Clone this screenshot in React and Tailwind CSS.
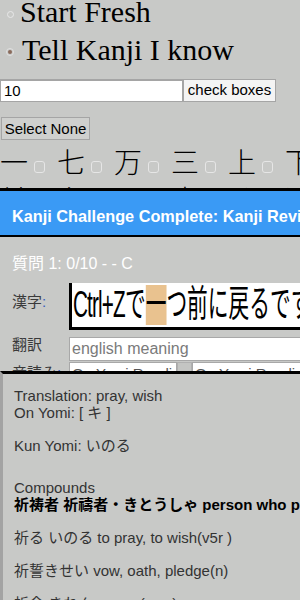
import React from "react";

const sans = { fontFamily: '"Liberation Sans", "Noto Sans CJK JP", sans-serif' };

const row1 = ["一", "七", "万", "三", "上", "下"];
const row2 = ["並", "主", "両", "光", "父", "込"];

const KanjiRow = ({ items }) => (
  <div className="flex flex-nowrap h-[38px] items-center">
    {items.map((k) => (
      <div key={k} className="flex items-center w-[57px] shrink-0">
        <span
          className="text-[28px] leading-[38px] text-black w-[28px]"
          style={{ fontFamily: '"Noto Sans CJK JP", sans-serif', fontWeight: 300 }}
        >
          {k}
        </span>
        <span className="ml-[6px] mt-[12px] w-[11px] h-[12px] rounded-[3px] border border-[#e6e6e6] bg-[#c8c9c7]" />
      </div>
    ))}
  </div>
);

export default function App() {
  return (
    <div className="relative w-[300px] h-[600px] overflow-hidden bg-[#c8c9c7]" style={sans}>
      {/* page underneath */}
      <div className="-mt-[7px]">
        <div className="flex items-center h-[38px]">
          <span className="ml-[7px] mt-[4px] w-[7px] h-[7px] rounded-full border border-[#e8e8e8]" />
          <span className="ml-[6px] text-[30px] leading-[38px] text-black" style={{ fontFamily: '"Liberation Serif", serif' }}>
            Start Fresh
          </span>
        </div>
        <div className="flex items-center h-[38px]">
          <span className="ml-[6px] mt-[4px] w-[8px] h-[8px] rounded-full border border-[#e0e0e0] flex items-center justify-center">
            <span className="w-[4px] h-[4px] rounded-full bg-[#8a6a5a]" />
          </span>
          <span className="ml-[8px] text-[30px] leading-[38px] text-black" style={{ fontFamily: '"Liberation Serif", serif' }}>
            Tell Kanji I know
          </span>
        </div>
      </div>

      <div className="flex mt-[10px]">
        <div className="w-[183px] h-[23px] bg-white border border-[#a5a5a5] border-t-2 text-[15px] leading-[19px] pl-[3px] text-black">
          10
        </div>
        <div className="w-[93px] h-[23px] border border-[#a5a5a5] bg-[#f4f4f4] text-[15px] leading-[20px] text-center text-black">
          check boxes
        </div>
      </div>

      <div className="mt-[15px] ml-[1px] w-[89px] h-[23px] border border-[#a5a5a5] bg-[#cfd0ce] text-[15px] leading-[21px] text-center text-black">
        Select None
      </div>

      <div className="mt-[2px]">
        <KanjiRow items={row1} />
        <KanjiRow items={row2} />
      </div>

      {/* modal */}
      <div className="absolute top-[188px] left-0 w-[340px] bottom-0 bg-[#c8c9c7] border-t-[3px] border-black">
        <div className="h-[46px] bg-[#3a9af5] border-b-2 border-black flex items-center pl-[12px] pt-[7px]">
          <span className="text-white font-bold text-[16.3px] whitespace-nowrap">
            Kanji Challenge Complete: Kanji Review
          </span>
        </div>

        <div className="mt-[17px] pl-[12px] text-white text-[16px] leading-[20px] whitespace-nowrap">
          質問 1: 0/10 - - C
        </div>

        <div className="flex mt-[9px]">
          <div className="w-[69px] shrink-0 pl-[12px] pt-[8px] text-[15px] text-[#3a3a3a]">
            漢字<span className="text-[#3a60c0]">:</span>
          </div>
          <div className="w-[280px] h-[47px] bg-white border-l-[3px] border-b-[3px] border-black overflow-hidden">
            <div
              className="inline-block origin-left scale-x-[0.56] whitespace-nowrap text-[37px] leading-[40px] mt-[2px] ml-[1px] text-black"
              style={{ fontFamily: '"Liberation Sans", "Noto Sans CJK JP", sans-serif' }}
            >
              <span className="tracking-[-1.5px]">Ctrl+Z</span>で<span className="inline-block h-[40px] bg-[#e9c28f]">一</span>つ前に戻るです
            </div>
          </div>
        </div>

        <div className="flex mt-[7px]">
          <div className="w-[69px] shrink-0 pl-[12px] -mt-[3px] text-[15px] text-[#3a3a3a]">翻訳</div>
          <div className="w-[280px] h-[24px] bg-white border border-[#a8a8a8] pl-[2px] text-[16px] leading-[22px] text-[#7a7a7a]">
            english meaning
          </div>
        </div>

        <div className="flex mt-[1px]">
          <div className="w-[69px] shrink-0 pl-[12px] text-[15px] text-[#3a3a3a] whitespace-nowrap">
            音読み<span className="text-[#3a60c0]">:</span>
          </div>
          <div className="w-[108px] h-[24px] bg-white border border-[#a8a8a8] pl-[2px] text-[15px] leading-[22px] text-[#555] whitespace-nowrap overflow-hidden">
            On Yomi Reading
          </div>
          <div className="w-[15px] h-[12px] bg-[#c4c5c3] border border-[#b0b0b0]" />
          <div className="w-[120px] h-[24px] bg-white border border-[#a8a8a8] pl-[2px] text-[15px] leading-[22px] text-[#555] whitespace-nowrap overflow-hidden">
            On Yomi Reading
          </div>
        </div>
      </div>

      {/* info popup */}
      <div className="absolute top-[371px] left-0 w-[340px] bottom-0 bg-[#c8c9c7] border-t-[3px] border-black border-l-[3px] border-l-[#a3a3a3] pl-[11px] pt-[13px] text-[15px] leading-[17px] text-[#333]">
        <p>
          Translation: pray, wish
          <br />
          On Yomi: [ キ ]
        </p>
        <p className="mt-[16px]">Kun Yomi: いのる</p>
        <p className="mt-[25px]">Compounds</p>
        <p className="font-bold text-black whitespace-nowrap">祈祷者 祈禱者・きとうしゃ person who prays</p>
        <p className="mt-[16px] whitespace-nowrap">祈る いのる to pray, to wish(v5r )</p>
        <p className="mt-[16px] whitespace-nowrap">祈誓きせい vow, oath, pledge(n)</p>
        <p className="mt-[16px] whitespace-nowrap">祈念 きねん prayer(n,vs)</p>
      </div>
    </div>
  );
}
